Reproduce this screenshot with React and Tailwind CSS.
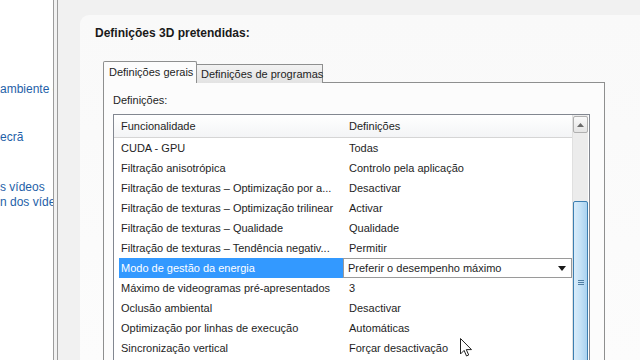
import React from "react";

const ROWS = [
  ["CUDA - GPU", "Todas"],
  ["Filtração anisotrópica", "Controlo pela aplicação"],
  ["Filtração de texturas – Optimização por a...", "Desactivar"],
  ["Filtração de texturas – Optimização trilinear", "Activar"],
  ["Filtração de texturas – Qualidade", "Qualidade"],
  ["Filtração de texturas – Tendência negativ...", "Permitir"],
  ["Modo de gestão da energia", "Preferir o desempenho máximo", true],
  ["Máximo de videogramas pré-apresentados", "3"],
  ["Oclusão ambiental", "Desactivar"],
  ["Optimização por linhas de execução", "Automáticas"],
  ["Sincronização vertical", "Forçar desactivação"],
];

// Sidebar link text is cut on the left edge by the panel; the prefix sits in a
// zero-width box so only the tail shows, like the original window.
const SIDE_LINKS = [
  { pre: "Ajustar as definições de cor do ", tail: "ambiente de trabalho", top: "mt-[82px]" },
  { pre: "Ajustar o tamanho e a posição do ", tail: "ecrã", top: "mt-[33px]" },
  { pre: "Ajustar as definições de cor do", tail: "s vídeos", top: "mt-[35px]" },
  { pre: "Ajustar as definições de image", tail: "n dos vídeos", top: "mt-0" },
];

function SideLink({ pre, tail, top }) {
  return (
    <div className={`${top} flex whitespace-nowrap text-[12px] leading-[15px] text-[#1f5fa8]`}>
      <span className="w-0 flex justify-end">{pre}</span>
      <span>{tail}</span>
    </div>
  );
}

export default function App() {
  return (
    <div
      className="w-[640px] h-[360px] flex overflow-hidden bg-white text-[#1e1e1e] relative"
      style={{ fontFamily: '"Liberation Sans", Arial, sans-serif' }}
    >
      <aside className="w-[53px] shrink-0 bg-white overflow-hidden">
        {SIDE_LINKS.map((l) => (
          <SideLink key={l.tail} {...l} />
        ))}
      </aside>
      <div className="w-[5px] shrink-0 border-x border-[#9c9c9c] bg-[#f2f2f2]" />

      <main className="flex-1 bg-[#f1f1f1] pl-[22px] pt-[15px]">
        <div className="h-full rounded-tl-[9px] bg-gradient-to-b from-[#f9f9f9] to-[#fcfcfc] pl-[15px] pt-[11px]">
          <h2 className="text-[12px] leading-[14px] font-bold text-[#1a1a1a]">Definições 3D pretendidas:</h2>

          <div className="ml-[8px] mt-[21px] w-[502px] text-[11px] whitespace-nowrap">
            <div className="flex items-end h-[22px] relative z-10">
              <div className="h-[22px] w-[94px] border border-b-0 border-[#8e8f8f] bg-[#fcfcfc] pl-[5px] pt-[3px] leading-[14px] rounded-t-[2px]">
                Definições gerais
              </div>
              <div className="h-[19px] w-[126px] border border-l-0 border-b-0 border-[#8e8f8f] bg-gradient-to-b from-[#f2f2f2] to-[#e3e3e3] pl-[4px] pt-[2px] leading-[14px]">
                Definições de programas
              </div>
            </div>
            <div className="-mt-px h-[300px] border border-[#8e8f8f] bg-[#fcfcfc] pl-[9px] pt-[10px]">
              <div className="leading-[14px]">Definições:</div>

              <div className="mt-[7px] w-[477px] h-[260px] border border-[#828790] bg-white flex">
                <div className="flex-1 min-w-0">
                  <div className="h-[23px] flex items-center border-b border-[#d5d5d5] bg-gradient-to-b from-white to-[#f3f4f6]">
                    <div className="w-[229px] pl-[7px]">Funcionalidade</div>
                    <div className="pl-[6px]">Definições</div>
                  </div>
                  {ROWS.map(([name, value, sel]) => (
                    <div key={name} className="h-[20px] flex items-center">
                      {sel ? (
                        <>
                          <div className="w-[229px] h-[20px] pl-[5px] flex items-center">
                            <div className="h-[20px] flex-1 bg-[#3399ff] text-white pl-[2px] flex items-center">{name}</div>
                          </div>
                          <div className="flex-1 h-[20px] border border-[#9a9a9a] bg-white flex items-center pl-[4px] pr-[5px]">
                            <span className="flex-1">{value}</span>
                            <svg width="8" height="5" viewBox="0 0 8 5">
                              <path d="M0 0h8L4 5z" fill="#1a1a1a" />
                            </svg>
                          </div>
                        </>
                      ) : (
                        <>
                          <div className="w-[229px] pl-[7px] overflow-hidden">{name}</div>
                          <div className="pl-[6px]">{value}</div>
                        </>
                      )}
                    </div>
                  ))}
                </div>

                <div className="w-[16px] shrink-0 mr-px bg-[#ececec] border-l border-[#e0e0e0] flex flex-col">
                  <div className="h-[17px] mt-px border border-[#b0b0b0] rounded-[2px] bg-gradient-to-b from-[#fafafa] to-[#e4e4e4] flex items-center justify-center">
                    <svg width="7" height="4" viewBox="0 0 7 4">
                      <path d="M0 4L3.5 0L7 4z" fill="#6a6a6a" />
                    </svg>
                  </div>
                  <div className="h-[68px]" />
                  <div className="flex-1 border border-[#3c7fb1] rounded-[2px] bg-gradient-to-r from-[#d9ecfa] via-[#c4e2f7] to-[#a9d2f0] flex flex-col items-center pt-[78px]">
                    <div className="w-[6px] h-px bg-[#4f7ea3]" />
                    <div className="w-[6px] h-px bg-[#4f7ea3] mt-px" />
                    <div className="w-[6px] h-px bg-[#4f7ea3] mt-px" />
                  </div>
                </div>
              </div>
            </div>
          </div>
        </div>
      </main>

      <svg className="absolute left-[460px] top-[338px]" width="12" height="19" viewBox="0 0 12 19">
        <path d="M0.5 0.5V16l3.6-3.6 2.4 5.6 2.2-1-2.4-5.4H11.5z" fill="white" stroke="#222" strokeWidth="1" />
      </svg>
    </div>
  );
}
